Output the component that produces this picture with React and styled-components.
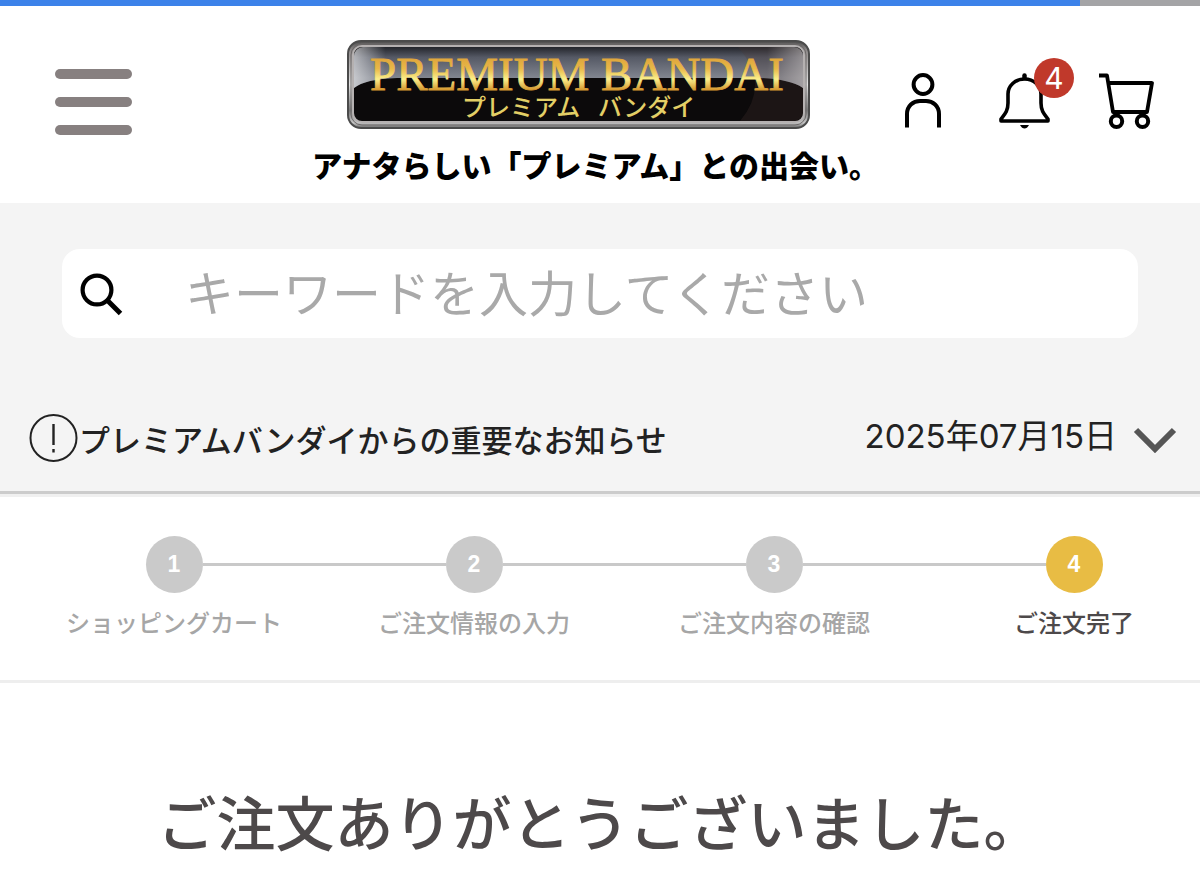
import React from "react";
import styled, { createGlobalStyle } from "styled-components";

const GlobalStyle = createGlobalStyle`
  * {
    box-sizing: border-box;
  }

  body {
    margin: 0;
    background: #fff;
    color: #222;
    font-family: "Noto Sans CJK JP", sans-serif;
  }

  button {
    padding: 0;
    border: 0;
    background: none;
    color: inherit;
    font: inherit;
    cursor: pointer;
  }

  svg {
    display: block;
  }
`;

const Page = styled.div`
  overflow: hidden;
`;

const LoadBar = styled.div`
  height: 6px;
  background: #a4a4a6;
`;

const LoadValue = styled.div`
  width: 90%;
  height: 100%;
  background: #3c82e9;
`;

const Header = styled.header`
  display: flex;
  align-items: flex-start;
  height: 197px;
  padding: 34px 46px 0 55px;
`;

const MenuButton = styled.button`
  display: flex;
  flex-direction: column;
  gap: 18px;
  width: 77px;
  margin-top: 29px;
`;

const MenuLine = styled.span`
  width: 100%;
  height: 10px;
  border-radius: 5px;
  background: #878080;
`;

const Brand = styled.a`
  display: flex;
  flex-direction: column;
  margin-left: auto;
  color: #000;
  text-decoration: none;

  svg {
    margin-left: 35px;
  }
`;

const Tagline = styled.span`
  margin-top: 13px;
  font-size: 30px;
  font-weight: 900;
  line-height: 44px;
  white-space: nowrap;
`;

const Actions = styled.nav`
  display: flex;
  gap: 48px;
  margin: 32px 0 0 26px;
`;

const ActionLink = styled.a`
  position: relative;
  color: #000;
`;

const Badge = styled.span`
  position: absolute;
  top: -14px;
  right: -23px;
  width: 40px;
  height: 40px;
  border-radius: 50%;
  background: #c0392b;
  color: #fff;
  font-family: Inter, sans-serif;
  font-size: 30px;
  line-height: 40px;
  text-align: center;
`;

const TopPanel = styled.section`
  padding: 46px 0 28px;
  border-bottom: 3px solid #ccc;
  background: #f4f4f4;
`;

const SearchForm = styled.form`
  display: flex;
  align-items: center;
  height: 89px;
  margin: 0 62px;
  padding-left: 16px;
  border-radius: 18px;
  background: #fff;
`;

const SearchInput = styled.input`
  flex: 1;
  min-width: 0;
  height: 100%;
  margin-left: 61px;
  padding: 0 0 6px;
  border: 0;
  outline: none;
  background: transparent;
  color: #222;
  font-family: inherit;
  font-size: 49px;

  &::placeholder {
    color: #a9a9a9;
    opacity: 1;
  }
`;

const Notice = styled.button`
  display: flex;
  align-items: center;
  width: 100%;
  margin-top: 75px;
  padding: 0 23px 0 29px;
  text-align: left;
`;

const NoticeTitle = styled.span`
  flex: 1;
  padding-top: 2px;
  font-size: 31px;
  font-weight: 500;
  line-height: 48px;
`;

const NoticeDate = styled.time`
  margin-right: 16px;
  padding-bottom: 4px;
  font-family: Inter, "Noto Sans CJK JP", sans-serif;
  font-size: 33px;
  line-height: 44px;
`;

const StepList = styled.ol`
  display: grid;
  grid-template-columns: repeat(4, 1fr);
  margin: 0 -24px 0 24px;
  padding: 39px 0 40px;
  list-style: none;
`;

const StepBar = styled.div`
  border-top: 3px solid #f0f0f0;
  border-bottom: 3px solid #eee;
`;

const Step = styled.li`
  color: ${(props) => (props.$current ? "#4d494a" : "#a6a6a6")};
  font-size: 24px;
  font-weight: 500;
  line-height: 36px;
  text-align: center;
`;

const StepTrack = styled.div`
  display: flex;
  align-items: center;
  margin-bottom: 11px;

  &::before,
  &::after {
    content: "";
    flex: 1;
    height: 3px;
    background: #c9c9c9;
  }

  ${Step}:first-child &::before,
  ${Step}:last-child &::after {
    background: transparent;
  }
`;

const StepNumber = styled.span`
  width: 57px;
  height: 57px;
  border-radius: 50%;
  background: ${(props) => (props.$current ? "#e8bc44" : "#cacaca")};
  color: #fff;
  font-family: "Liberation Sans", Arial, sans-serif;
  font-size: 23px;
  font-weight: 700;
  line-height: 56px;
`;

const Message = styled.h1`
  margin: 94px 0 0;
  color: #4d494a;
  font-size: 59px;
  font-weight: 500;
  line-height: 88px;
  text-align: center;
`;

const steps = [
  "ショッピングカート",
  "ご注文情報の入力",
  "ご注文内容の確認",
  "ご注文完了"
];

const Logo = () => (
  <svg width="463" height="89" viewBox="0 0 463 89" role="img">
    <defs>
      <linearGradient id="rim" x1="0" y1="0" x2="0" y2="1">
        <stop offset="0" stopColor="#4a4a4a" />
        <stop offset="0.1" stopColor="#8c8888" />
        <stop offset="0.5" stopColor="#e4e4e4" />
        <stop offset="0.8" stopColor="#777" />
        <stop offset="0.94" stopColor="#c4c4c4" />
        <stop offset="1" stopColor="#666" />
      </linearGradient>
      <linearGradient id="gloss" x1="0" y1="0" x2="0" y2="1">
        <stop offset="0" stopColor="#23252b" />
        <stop offset="0.25" stopColor="#555965" />
        <stop offset="0.75" stopColor="#81858f" />
      </linearGradient>
      <linearGradient id="shine" x1="0" y1="0" x2="1" y2="0">
        <stop offset="0" stopColor="#fff" stopOpacity="0.55" />
        <stop offset="0.07" stopColor="#fff" stopOpacity="0" />
        <stop offset="0.92" stopColor="#fff" stopOpacity="0" />
        <stop offset="1" stopColor="#fff" stopOpacity="0.5" />
      </linearGradient>
      <linearGradient id="gold" x1="0" y1="0" x2="0" y2="1">
        <stop offset="0.2" stopColor="#dfa63c" />
        <stop offset="0.4" stopColor="#e9b948" />
        <stop offset="0.6" stopColor="#fbf08c" />
        <stop offset="0.8" stopColor="#d79a31" />
      </linearGradient>
      <clipPath id="plate">
        <rect x="7" y="7" width="449" height="74" rx="9" />
      </clipPath>
    </defs>
    <rect x="1" y="1" width="461" height="87" rx="13" fill="url(#rim)" stroke="#4b4b4b" strokeWidth="2" />
    <rect x="4" y="4" width="455" height="81" rx="11" fill="none" stroke="#6d6969" strokeWidth="1" />
    <rect x="6" y="6" width="451" height="76" rx="9" fill="#0c0a0b" stroke="#b5b1b1" strokeWidth="2" />
    <g clipPath="url(#plate)">
      <path d="M7 7H456V48Q442 39 412 38H50Q18 39 7 48Z" fill="url(#gloss)" />
      <path d="M7 7H456V48Q442 39 412 38H50Q18 39 7 48Z" fill="url(#shine)" />
      <path d="M391 7Q424 44 393 81H456V7Z" fill="#4b3632" opacity="0.25" />
    </g>
    <text x="23" y="50" fill="url(#gold)" stroke="url(#gold)" strokeWidth="0.8" fontFamily="Liberation Serif, Times New Roman, serif" fontSize="47">
      PREMIUM BANDAI
    </text>
    <g fill="#e3cf66" fontFamily="Noto Sans CJK JP, sans-serif" fontSize="24" fontWeight="500">
      <text x="115" y="76">プレミアム</text>
      <text x="251" y="76">バンダイ</text>
    </g>
  </svg>
);

const UserIcon = () => (
  <svg width="46" height="58" viewBox="0 0 46 58" fill="none" stroke="currentColor" strokeWidth="4">
    <circle cx="18" cy="12.5" r="9.4" />
    <path d="M2 55.5V42C2 34 8 29 15 29H21C28 29 34 34 34 42V55.5" />
  </svg>
);

const BellIcon = () => (
  <svg width="52" height="58" viewBox="0 0 52 58" fill="none" stroke="currentColor" strokeWidth="3.6" strokeLinejoin="round">
    <path d="M25.5 3.5V6" strokeWidth="4.5" strokeLinecap="round" />
    <path d="M25.5 7C16 7 9 14 9 22V31C9 39 6 42 2 47V49H49V47C45 42 42 39 42 31V22C42 14 35 7 25.5 7Z" />
    <path d="M21 53H30Q28 56.5 25.5 56.5T21 53Z" fill="currentColor" stroke="none" />
  </svg>
);

const CartIcon = () => (
  <svg width="55" height="58" viewBox="0 0 55 58" fill="none" stroke="currentColor" strokeWidth="3.8" strokeLinejoin="round">
    <path d="M0 3.5H8L14 40H48L53 11H10" />
    <circle cx="17.5" cy="49.3" r="5.7" strokeWidth="4" />
    <circle cx="43.5" cy="49.3" r="5.7" strokeWidth="4" />
  </svg>
);

const App = () => (
  <Page>
    <GlobalStyle />
    <LoadBar>
      <LoadValue />
    </LoadBar>
    <Header>
      <MenuButton type="button" aria-label="メニュー">
        <MenuLine />
        <MenuLine />
        <MenuLine />
      </MenuButton>
      <Brand href="#top">
        <Logo />
        <Tagline>アナタらしい「プレミアム」との出会い。</Tagline>
      </Brand>
      <Actions>
        <ActionLink href="#account" aria-label="マイページ">
          <UserIcon />
        </ActionLink>
        <ActionLink href="#news" aria-label="お知らせ">
          <BellIcon />
          <Badge>4</Badge>
        </ActionLink>
        <ActionLink href="#cart" aria-label="カート">
          <CartIcon />
        </ActionLink>
      </Actions>
    </Header>
    <TopPanel>
      <SearchForm role="search">
        <button type="submit" aria-label="検索">
          <svg width="46" height="46" viewBox="0 0 46 46" fill="none" stroke="#000" strokeWidth="4.2">
            <circle cx="19" cy="19" r="14.4" />
            <path d="M29 29L42.5 42.5" strokeWidth="5" />
          </svg>
        </button>
        <SearchInput type="search" aria-label="キーワード" placeholder="キーワードを入力してください" />
      </SearchForm>
      <Notice type="button">
        <svg width="50" height="50" viewBox="0 0 50 50" fill="none" stroke="#222" strokeWidth="2">
          <circle cx="24.5" cy="25" r="23" />
          <path d="M24.5 11V32M24.5 36V39.5" strokeWidth="2.4" />
        </svg>
        <NoticeTitle>プレミアムバンダイからの重要なお知らせ</NoticeTitle>
        <NoticeDate dateTime="2025-07-15">2025年07月15日</NoticeDate>
        <svg width="44" height="30" viewBox="0 0 44 30" fill="none" stroke="#555" strokeWidth="6">
          <path d="M3 7L22 26L41 7" />
        </svg>
      </Notice>
    </TopPanel>
    <StepBar>
      <StepList>
        {steps.map((label, i) => {
          const current = i === steps.length - 1;
          return (
            <Step key={label} $current={current} aria-current={current ? "step" : undefined}>
              <StepTrack>
                <StepNumber $current={current}>{i + 1}</StepNumber>
              </StepTrack>
              {label}
            </Step>
          );
        })}
      </StepList>
    </StepBar>
    <Message>ご注文ありがとうございました。</Message>
  </Page>
);

export default App;
